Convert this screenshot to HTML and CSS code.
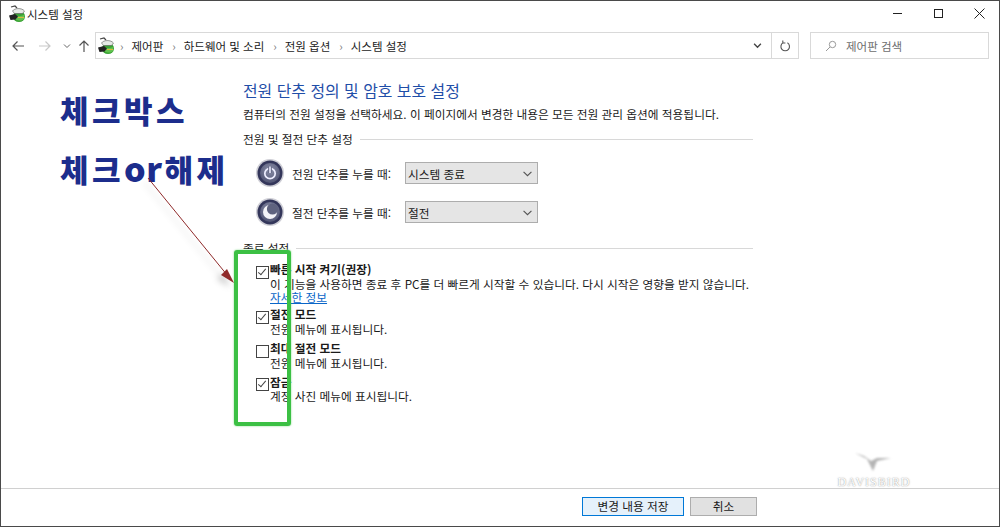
FILE: index.html
```html
<!DOCTYPE html>
<html lang="ko">
<head>
  <meta charset="UTF-8" />
  <title>시스템 설정</title>
  <link rel="stylesheet" href="styles.css">
</head>
<body>

<div class="window">
  <div class="titlebar">
    <svg class="app-icon" viewBox="0 0 18 18"><use href="#power-plan" /></svg>
    <span class="title-text">시스템 설정</span>
    <div class="win-btns">
      <svg viewBox="0 0 11 11" class="win-btn"><path d="M1 5.500h9" stroke="#222" stroke-width="1" fill="none" /></svg>
      <svg viewBox="0 0 11 11" class="win-btn"><rect x="1.500" y="1.500" width="8" height="8" stroke="#222" fill="none" /></svg>
      <svg viewBox="0 0 11 11" class="win-btn"><path d="M.5 .5l10 10M10.500 .5l-10 10" stroke="#222" fill="none" /></svg>
    </div>
  </div>

  <div class="navbar">
    <div class="nav-btns">
      <svg class="nav-arrow" viewBox="0 0 12 12"><path d="M12 6H1M5.500 1.500L1 6l4.500 4.500" stroke="#555" stroke-width="1.200" fill="none" /></svg>
      <svg class="nav-arrow" viewBox="0 0 12 12"><path d="M0 6h11M6.500 1.500L11 6l-4.500 4.500" stroke="#c8c8c8" stroke-width="1.200" fill="none" /></svg>
      <svg class="nav-drop" viewBox="0 0 8 8"><path d="M1 2.500l3 3 3-3" stroke="#666" fill="none" /></svg>
      <svg class="nav-arrow" viewBox="0 0 12 12"><path d="M6 12V1M1.500 5.500L6 1l4.500 4.500" stroke="#555" stroke-width="1.200" fill="none" /></svg>
    </div>
    <div class="address">
      <svg class="crumb-icon" viewBox="0 0 18 18"><use href="#power-plan" /></svg>
      <span class="sep">›</span><span>제어판</span>
      <span class="sep">›</span><span>하드웨어 및 소리</span>
      <span class="sep">›</span><span>전원 옵션</span>
      <span class="sep">›</span><span>시스템 설정</span>
      <svg class="addr-drop" viewBox="0 0 8 8"><path d="M1 2.500l3 3 3-3" stroke="#444" stroke-width="1.200" fill="none" /></svg>
    </div>
    <div class="refresh">
      <svg viewBox="0 0 12 12" width="12" height="12"><path d="M4 2.800a4.300 4.300 0 1 0 4.400 0M3.800 .4v2.600h2.600" stroke="#555" stroke-width="1.100" fill="none" /></svg>
    </div>
    <div class="search">
      <svg viewBox="0 0 12 12" width="12" height="12"><circle cx="7.500" cy="4.500" r="3.200" stroke="#999" fill="none" /><path d="M5 7L1 11" stroke="#999" fill="none" /></svg>
      <span>제어판 검색</span>
    </div>
  </div>

  <div class="content">
    <h1 class="heading">전원 단추 정의 및 암호 보호 설정</h1>
    <p class="desc">컴퓨터의 전원 설정을 선택하세요. 이 페이지에서 변경한 내용은 모든 전원 관리 옵션에 적용됩니다.</p>

    <div class="group-label"><span>전원 및 절전 단추 설정</span></div>

    <div class="btn-row">
      <svg class="orb" viewBox="0 0 28 28"><use href="#orb" /><circle cx="14" cy="14.500" r="5.200" fill="none" stroke="#eef" stroke-width="1.700" /><path d="M14 7.500v6.500" stroke="#636784" stroke-width="3.600" /><path d="M14 7.500v6.500" stroke="#eef" stroke-width="1.600" /></svg>
      <span class="btn-label">전원 단추를 누를 때:</span>
      <div class="select"><span>시스템 종료</span><svg viewBox="0 0 8 8" width="9" height="9"><path d="M.5 2.500L4 6l3.500-3.500" stroke="#555" fill="none" /></svg></div>
    </div>
    <div class="btn-row">
      <svg class="orb" viewBox="0 0 28 28"><use href="#orb" /><circle cx="14" cy="14" r="7" fill="#f4f4f8" /><circle cx="16.500" cy="11" r="5.600" fill="#5f637f" /></svg>
      <span class="btn-label">절전 단추를 누를 때:</span>
      <div class="select"><span>절전</span><svg viewBox="0 0 8 8" width="9" height="9"><path d="M.5 2.500L4 6l3.500-3.500" stroke="#555" fill="none" /></svg></div>
    </div>

    <div class="group-label group-label-2"><span>종료 설정</span></div>

    <div class="opt opt-first">
      <span class="box checked"></span>
      <div class="opt-text">
        <div class="opt-name">빠른 시작 켜기(권장)</div>
        <div>이 기능을 사용하면 종료 후 PC를 더 빠르게 시작할 수 있습니다. 다시 시작은 영향을 받지 않습니다.</div>
        <a class="more" href="#">자세한 정보</a>
      </div>
    </div>
    <div class="opt">
      <span class="box checked"></span>
      <div class="opt-text">
        <div class="opt-name">절전 모드</div>
        <div>전원 메뉴에 표시됩니다.</div>
      </div>
    </div>
    <div class="opt">
      <span class="box"></span>
      <div class="opt-text">
        <div class="opt-name">최대 절전 모드</div>
        <div>전원 메뉴에 표시됩니다.</div>
      </div>
    </div>
    <div class="opt">
      <span class="box checked"></span>
      <div class="opt-text">
        <div class="opt-name">잠금</div>
        <div>계정 사진 메뉴에 표시됩니다.</div>
      </div>
    </div>
  </div>

  <div class="footer">
    <button class="btn btn-primary">변경 내용 저장</button>
    <button class="btn">취소</button>
  </div>
</div>

<!-- annotations drawn on top of the screenshot -->
<div class="note note-1">체크박스</div>
<div class="note note-2">체크<span class="note-or">or</span>해제</div>
<div class="green-box"></div>
<svg class="arrow" viewBox="0 0 90 110" width="90" height="110">
  <path d="M0 0L84 103" stroke="#8f2a2a" stroke-width="1" fill="none" />
  <path d="M86 105L73 97L79 91Z" fill="#8f2a2a" />
</svg>

<div class="watermark">
  <svg viewBox="0 0 40 22" width="40" height="22"><path d="M1 2l12 6 6 12 4-10 14-3-14 0-6 3-7-5z" fill="#b4b4b4" /></svg>
  <span>DAVISBIRD</span>
</div>

<svg class="defs" width="0" height="0">
  <defs>
    <symbol id="power-plan" viewBox="0 0 18 18">
      <path d="M3 2l4-1 2 2" fill="none" stroke="#444" stroke-width="1.200" />
      <ellipse cx="11" cy="11.500" rx="6" ry="5.500" fill="#3aa335" />
      <path d="M7 10c2 1.500 6 1.500 9 0v4c-2 2-6 2-8 .5z" fill="#62c24f" />
      <path d="M4.500 6c2-3 9-3.500 12 0l-2 2.500H6.500z" fill="#e6eae6" stroke="#555" stroke-width=".6" />
      <path d="M1 10.500l6-1.500 3 2.500-2.500 3-5 .5z" fill="#222" />
      <path d="M10 12.500h6" stroke="#d8b840" />
    </symbol>
    <radialGradient id="orb-fill" cx="50%" cy="35%" r="65%">
      <stop offset="0" stop-color="#8d91ab" />
      <stop offset="1" stop-color="#4f5372" />
    </radialGradient>
    <symbol id="orb" viewBox="0 0 28 28">
      <circle cx="14" cy="14" r="14" fill="#cfcfd6" />
      <circle cx="14" cy="14" r="12.500" fill="#33365a" />
      <circle cx="14" cy="14" r="10" fill="url(#orb-fill)" />
    </symbol>
  </defs>
</svg>

</body>
</html>
```

FILE: styles.css
```css
html, body {
  margin: 0;
  padding: 0;
}

body {
  width: 1000px;
  height: 527px;
  overflow: hidden;
  position: relative;
  background: #fff;
  font-family: "Noto Sans CJK KR", "Noto Sans", sans-serif;
  font-size: 11.7px;
  color: #1a1a1a;
}

.defs { position: absolute; }

.window {
  box-sizing: border-box;
  width: 1000px;
  height: 527px;
  border: 1px solid #4a4a4a;
  display: flex;
  flex-direction: column;
}

.titlebar {
  display: flex;
  align-items: center;
  height: 26px;
  padding-left: 7px;
  flex-shrink: 0;
}

.app-icon { width: 18px; height: 18px; margin-right: 1px; }
.title-text { font-size: 11.5px; line-height: 26px; }

.win-btns {
  margin-left: auto;
  display: flex;
  gap: 30px;
  padding: 0 14px 2px 0;
}

.win-btn { width: 11px; height: 11px; }

.navbar {
  display: flex;
  align-items: center;
  height: 27px;
  margin-top: 5px;
  flex-shrink: 0;
}

.nav-btns {
  display: flex;
  align-items: center;
  width: 94px;
  padding-left: 11px;
  box-sizing: border-box;
}

.nav-btns svg { flex-shrink: 0; }

.nav-arrow { width: 12px; height: 12px; margin-right: 15px; }
.nav-arrow:nth-child(2) { margin-right: 12px; }
.nav-arrow:last-child { margin-right: 0; }
.nav-drop { width: 8px; height: 8px; margin-right: 7px; }

.address {
  display: flex;
  align-items: center;
  gap: 9px;
  width: 677px;
  height: 27px;
  box-sizing: border-box;
  border: 1px solid #d9d9d9;
  padding-left: 1px;
  font-size: 11.5px;
}

.crumb-icon { width: 18px; height: 18px; margin-right: -4px; }
.sep { color: #777; margin-right: -1px; }
.addr-drop { width: 9px; height: 9px; margin-left: auto; margin-right: 9px; }

.refresh {
  width: 27px;
  height: 27px;
  box-sizing: border-box;
  border: 1px solid #d9d9d9;
  border-left: 0;
  display: flex;
  align-items: center;
  justify-content: center;
}

.search {
  display: flex;
  align-items: center;
  gap: 9px;
  width: 179px;
  height: 27px;
  margin-left: 11px;
  padding-left: 14px;
  box-sizing: border-box;
  border: 1px solid #d9d9d9;
  color: #6d6d6d;
  font-size: 11.5px;
}

.content {
  flex: 1;
  padding: 21px 0 0 242px;
}

.heading {
  margin: 0;
  font-size: 15.9px;
  font-weight: 400;
  line-height: 22px;
  color: #1f4ea8;
}

.desc {
  margin: 3px 0 0;
  line-height: 18px;
}

.group-label {
  display: flex;
  align-items: center;
  width: 510px;
  margin-top: 7px;
  line-height: 18px;
}

.group-label::after {
  content: "";
  flex: 1;
  height: 1px;
  background: #d8d8d8;
  margin-left: 7px;
}

.group-label-2 { margin-top: 13px; }

.btn-row {
  display: flex;
  align-items: center;
  height: 28px;
  margin-top: 11px;
  padding-left: 13px;
}

.btn-row:first-of-type { margin-top: 12px; }

.orb { width: 28px; height: 28px; }
.btn-label { width: 113px; margin-left: 8px; }

.select {
  display: flex;
  align-items: center;
  justify-content: space-between;
  width: 133px;
  height: 22px;
  box-sizing: border-box;
  padding: 0 5px 0 2px;
  background: #e5e5e5;
  border: 1px solid #adadad;
}

.opt {
  display: flex;
  margin-top: 4.75px;
  padding-left: 13px;
}

.opt-first { margin-top: 5px; }

.box {
  box-sizing: border-box;
  width: 13px;
  height: 13px;
  flex-shrink: 0;
  margin: 3.5px 1px 0 0;
  border: 1px solid #444;
  background: #fff;
  position: relative;
}

.box.checked::after {
  content: "";
  position: absolute;
  left: 3px;
  top: 0;
  width: 4px;
  height: 8px;
  box-sizing: border-box;
  border: solid #444;
  border-width: 0 1.2px 1.2px 0;
  transform: rotate(40deg);
}

.opt-text { line-height: 14.5px; }
.opt-name { font-weight: 700; }

.more {
  display: block;
  margin: -1px 0 -2px;
  color: #0a66c8;
  text-decoration: underline;
}

.footer {
  height: 38px;
  flex-shrink: 0;
  border-top: 1px solid #d0d0d0;
  display: flex;
  justify-content: flex-end;
  align-items: center;
  gap: 6px;
  padding: 0 242px 3px 0;
  box-sizing: border-box;
}

.btn {
  width: 67px;
  height: 19px;
  padding: 0;
  background: #e1e1e1;
  border: 1px solid #adadad;
  font: inherit;
  line-height: 16px;
  color: #1a1a1a;
}

.btn-primary {
  width: 102px;
  background: #e5f1fb;
  border: 1px solid #0078d7;
}

.note {
  position: absolute;
  left: 60px;
  font-size: 31px;
  font-weight: 900;
  letter-spacing: 3.5px;
  line-height: 36px;
  color: #1c2d8c;
  white-space: nowrap;
}

.note-1 { top: 92px; }
.note-2 { top: 150px; }

.note-or {
  font-size: 34px;
  letter-spacing: .5px;
  margin-right: 2px;
}

.green-box {
  position: absolute;
  left: 234px;
  top: 250px;
  width: 49px;
  height: 168px;
  border: 4px solid #3cc044;
  border-radius: 3px;
  box-shadow: 0 0 2px #3cc044aa;
}

.arrow {
  position: absolute;
  left: 148px;
  top: 178px;
  overflow: visible;
  filter: drop-shadow(-4px 4px 3px rgba(0,0,0,.22));
}

.watermark {
  position: absolute;
  left: 830px;
  top: 451px;
  width: 88px;
  display: flex;
  flex-direction: column;
  align-items: center;
  gap: 2px;
  font-family: "Liberation Serif", serif;
  font-size: 12px;
  letter-spacing: 1px;
  color: #fff;
  text-shadow: 0 0 1.5px #777;
}

.watermark svg { filter: blur(1px); }
```
